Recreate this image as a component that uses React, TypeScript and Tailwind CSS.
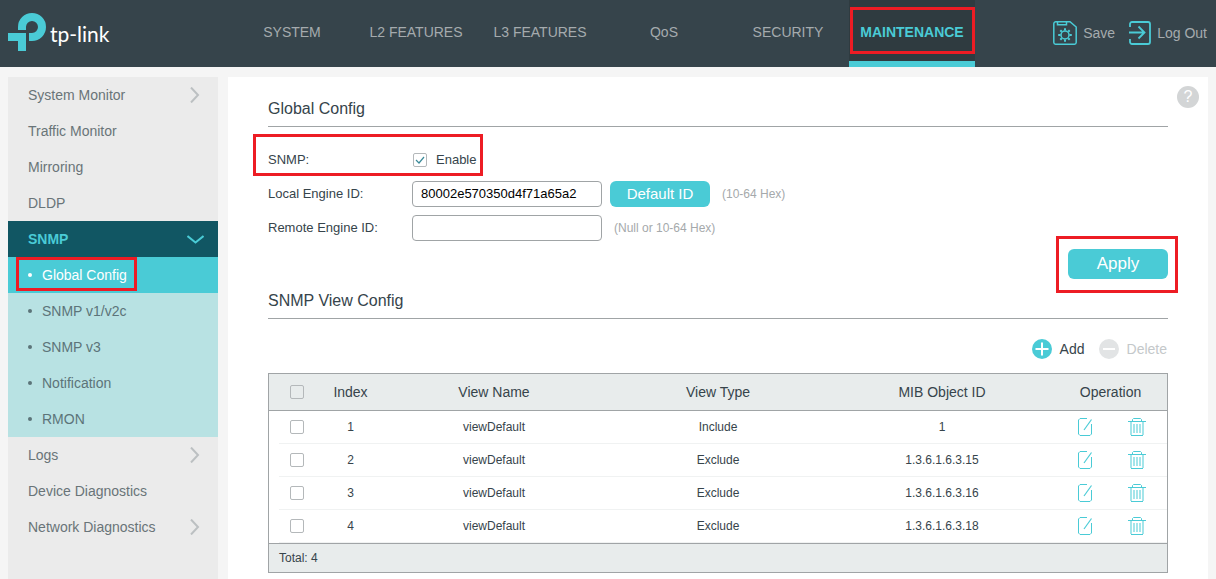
import { useState } from 'react';
import type { ReactNode } from 'react';
import clsx from 'clsx';

const TABS = [
    'SYSTEM',
    'L2 FEATURES',
    'L3 FEATURES',
    'QoS',
    'SECURITY',
    'MAINTENANCE',
];

type MenuItem = {
    title: string;
    expandable?: boolean;
    children?: string[];
};

const MENU: MenuItem[] = [
    { title: 'System Monitor', expandable: true },
    { title: 'Traffic Monitor' },
    { title: 'Mirroring' },
    { title: 'DLDP' },
    {
        title: 'SNMP',
        children: [
            'Global Config',
            'SNMP v1/v2c',
            'SNMP v3',
            'Notification',
            'RMON',
        ],
    },
    { title: 'Logs', expandable: true },
    { title: 'Device Diagnostics' },
    { title: 'Network Diagnostics', expandable: true },
];

type View = {
    index: number;
    name: string;
    type: 'Include' | 'Exclude';
    oid: string;
};

const VIEWS: View[] = [
    { index: 1, name: 'viewDefault', type: 'Include', oid: '1' },
    { index: 2, name: 'viewDefault', type: 'Exclude', oid: '1.3.6.1.6.3.15' },
    { index: 3, name: 'viewDefault', type: 'Exclude', oid: '1.3.6.1.6.3.16' },
    { index: 4, name: 'viewDefault', type: 'Exclude', oid: '1.3.6.1.6.3.18' },
];

function Highlight({ className }: { className: string }) {
    return (
        <span
            aria-hidden="true"
            className={clsx(
                'pointer-events-none absolute border-3 border-[#ed1c24]',
                className,
            )}
        />
    );
}

function Logo() {
    return (
        <a
            href="#home"
            className="flex w-[230px] shrink-0 items-center pb-[3px] pl-2"
        >
            <svg width="38" height="38" viewBox="8 13 38 38" fill="#4acbd6">
                <path d="M18 30V27A14 14 0 1 1 32 41H29V33H32A6 6 0 1 0 26 27V30Z" />
                <path d="M8 33H26V51H18V41H8Z" />
            </svg>
            <span className="pt-1 pl-1 font-['Lato',sans-serif] text-[21px] leading-6 text-white">
                tp-link
            </span>
        </a>
    );
}

function SaveIcon() {
    return (
        <svg
            width="24"
            height="24"
            viewBox="0 0 24 24"
            fill="none"
            stroke="#4acbd6"
            strokeWidth="1.5"
        >
            <path d="M3 .8H17L23.2 6V21.5A1.8 1.8 0 0 1 21.5 23.2H2.5A1.8 1.8 0 0 1 .8 21.5V2.8A2 2 0 0 1 3 .8Z" />
            <path d="M4.5 1V3.8H13.5V1" />
            <circle cx="12" cy="14" r="4" />
            <path
                d="M12 7.2V9.6M12 18.4V20.8M5.2 14H7.6M16.4 14H18.8M7.3 9.3L8.8 10.8M15.2 17.2L16.7 18.7M7.3 18.7L8.8 17.2M15.2 10.8L16.7 9.3"
                strokeWidth="2"
            />
        </svg>
    );
}

function LogoutIcon() {
    return (
        <svg
            width="22"
            height="24"
            viewBox="0 0 22 24"
            fill="none"
            stroke="#4acbd6"
            strokeWidth="1.8"
        >
            <path d="M1 6V3A2 2 0 0 1 3 1H19A2 2 0 0 1 21 3V21A2 2 0 0 1 19 23H3A2 2 0 0 1 1 21V18" />
            <path d="M0 11.5H15M9.5 5.5L15.5 11.5L9.5 17.5" />
        </svg>
    );
}

function EditIcon() {
    return (
        <svg
            width="14"
            height="18"
            viewBox="0 0 14 18"
            fill="none"
            stroke="#4acbd6"
        >
            <path d="M9 .5H2L.5 2V16L2 17.5H12L13.5 16V6" />
            <path d="M13.5 1.5L6 12" strokeWidth="1.2" />
        </svg>
    );
}

function TrashIcon() {
    return (
        <svg
            width="18"
            height="18"
            viewBox="0 0 18 18"
            fill="none"
            stroke="#4acbd6"
        >
            <path d="M0 3.5H18M4.5 3V1.5L5.5 .5H12.5L13.5 1.5V3M3 17.5H15" />
            <path
                d="M3 4V17M15 4V17M6 6V15M9 6V15M12 6V15"
                strokeWidth="2"
                opacity=".5"
            />
        </svg>
    );
}

function RoundSign({ plus }: { plus?: boolean }) {
    return (
        <svg width="20" height="20" viewBox="0 0 20 20">
            <circle cx="10" cy="10" r="10" fill={plus ? '#4acbd6' : '#e2e4e5'} />
            <path
                d={plus ? 'M3.5 10H16.5M10 3.5V16.5' : 'M4 10H16'}
                stroke="#fff"
                strokeWidth="2"
            />
        </svg>
    );
}

type CheckboxProps = {
    id?: string;
    label?: string;
    checked: boolean;
    onChange: () => void;
};

function Checkbox({ id, label, checked, onChange }: CheckboxProps) {
    return (
        <span className="grid size-[14px]">
            <input
                type="checkbox"
                id={id}
                aria-label={label}
                checked={checked}
                onChange={onChange}
                className="col-start-1 row-start-1 size-[14px] appearance-none rounded-xs border border-[#b4b8ba]"
            />
            {checked && (
                <svg
                    width="14"
                    height="14"
                    viewBox="0 0 14 14"
                    fill="none"
                    stroke="#3a8a99"
                    className="pointer-events-none col-start-1 row-start-1"
                >
                    <path d="M3 7L6 10L11 4" strokeWidth="1.2" />
                </svg>
            )}
        </span>
    );
}

function Header() {
    return (
        <header className="flex h-[67px] shrink-0 bg-[#36444b]">
            <Logo />
            <nav className="flex">
                {TABS.map((tab) => {
                    const active = tab === 'MAINTENANCE';
                    return (
                        <a
                            key={tab}
                            href={`#${tab.toLowerCase()}`}
                            className={clsx(
                                'relative flex items-center justify-center border-b-6 pt-[2px] text-sm whitespace-nowrap',
                                active
                                    ? '-ml-px w-[126px] border-[#4acbd6] bg-[#2f3b40] font-bold text-[#4acbd6]'
                                    : 'w-31 border-transparent text-[#a5abae]',
                            )}
                        >
                            {tab}
                            {active && (
                                <Highlight className="top-[7px] right-0 left-px h-[47px]" />
                            )}
                        </a>
                    );
                })}
            </nav>
            <div className="ml-auto flex items-center gap-[14px] pr-[9px] pb-[2px] text-sm text-[#a5abae]">
                <button type="button" className="flex items-center gap-[6px]">
                    <SaveIcon />
                    Save
                </button>
                <button type="button" className="flex items-center gap-[6px]">
                    <LogoutIcon />
                    Log Out
                </button>
            </div>
        </header>
    );
}

function Sidebar() {
    return (
        <nav className="w-[210px] shrink-0 bg-[#ebebeb] text-sm text-[#697478]">
            {MENU.map((item) => (
                <div key={item.title}>
                    <a
                        href="#menu"
                        className={clsx(
                            'flex h-9 items-center justify-between pl-5',
                            item.children
                                ? 'bg-[#115663] pr-[14px] font-bold text-[#4acbd6]'
                                : 'pr-[18px]',
                        )}
                    >
                        {item.title}
                        {item.expandable && (
                            <svg
                                width="10"
                                height="16"
                                viewBox="0 0 10 16"
                                fill="none"
                                stroke="#bcc0c2"
                                strokeWidth="2"
                            >
                                <path d="M1 .5L8 8L1 15.5" />
                            </svg>
                        )}
                        {item.children && (
                            <svg
                                width="17"
                                height="9"
                                viewBox="0 0 17 9"
                                fill="none"
                                stroke="#4acbd6"
                                strokeWidth="2"
                            >
                                <path d="M.5 1L8.5 7.5L16.5 1" />
                            </svg>
                        )}
                    </a>
                    {item.children?.map((child) => {
                        const active = child === 'Global Config';
                        return (
                            <a
                                key={child}
                                href="#submenu"
                                className={clsx(
                                    'relative flex h-9 items-center gap-[10px] pl-5',
                                    active
                                        ? 'bg-[#4acbd6] text-white'
                                        : 'bg-[#b8e2e3] text-[#5c7479]',
                                )}
                            >
                                <span className="size-1 rounded-full bg-current" />
                                {child}
                                {active && (
                                    <Highlight className="top-0 left-2 h-[34px] w-[121px]" />
                                )}
                            </a>
                        );
                    })}
                </div>
            ))}
        </nav>
    );
}

function SectionTitle({ children }: { children: ReactNode }) {
    return (
        <h2 className="border-b border-[#a0a4a6] pb-[5px] text-base leading-6">
            {children}
        </h2>
    );
}

function GlobalConfig() {
    const [enabled, setEnabled] = useState(true);
    const [localId, setLocalId] = useState('80002e570350d4f71a65a2');
    const [remoteId, setRemoteId] = useState('');

    return (
        <form className="pt-5" onSubmit={(e) => e.preventDefault()}>
            <SectionTitle>Global Config</SectionTitle>
            <div className="pt-4 text-[13px]">
                <div className="relative flex h-[34px] items-center">
                    <label htmlFor="snmp" className="w-36">
                        SNMP:
                    </label>
                    <span className="flex items-center gap-[9px] pl-px">
                        <Checkbox
                            id="snmp"
                            checked={enabled}
                            onChange={() => setEnabled(!enabled)}
                        />
                        <label htmlFor="snmp">Enable</label>
                    </span>
                    <Highlight className="-top-[9px] -left-[15px] h-[42px] w-[230px]" />
                </div>
                <div className="flex h-[34px] items-center">
                    <label htmlFor="local-id" className="w-36">
                        Local Engine ID:
                    </label>
                    <input
                        id="local-id"
                        type="text"
                        value={localId}
                        onChange={(e) => setLocalId(e.target.value)}
                        className="h-[26px] w-[190px] rounded border border-[#a0a4a6] px-2 pb-[2px] text-black"
                    />
                    <button
                        type="button"
                        className="ml-2 h-[26px] w-[100px] rounded-md bg-[#4acbd6] text-[15px] text-white"
                    >
                        Default ID
                    </button>
                    <span className="ml-3 text-xs text-[#a5a9ab]">
                        (10-64 Hex)
                    </span>
                </div>
                <div className="flex h-[34px] items-center">
                    <label htmlFor="remote-id" className="w-36">
                        Remote Engine ID:
                    </label>
                    <input
                        id="remote-id"
                        type="text"
                        value={remoteId}
                        onChange={(e) => setRemoteId(e.target.value)}
                        className="h-[26px] w-[190px] rounded border border-[#a0a4a6] px-2 pb-[2px] text-black"
                    />
                    <span className="ml-3 text-xs text-[#a5a9ab]">
                        (Null or 10-64 Hex)
                    </span>
                </div>
            </div>
            <div className="flex justify-end pt-1">
                <div className="relative">
                    <button
                        type="submit"
                        className="block h-[30px] w-[100px] rounded-md bg-[#4acbd6] text-[17px] text-white"
                    >
                        Apply
                    </button>
                    <Highlight className="-top-[13px] -right-[10px] -bottom-[14px] -left-3" />
                </div>
            </div>
        </form>
    );
}

function ViewConfig() {
    const [selected, setSelected] = useState<number[]>([]);

    const toggle = (index: number) => {
        setSelected((prev) =>
            prev.includes(index)
                ? prev.filter((i) => i !== index)
                : [...prev, index],
        );
    };

    const allSelected = selected.length === VIEWS.length;

    return (
        <section className="pt-[10px]">
            <SectionTitle>SNMP View Config</SectionTitle>
            <div className="flex justify-end gap-[14px] pt-5 pr-px text-sm leading-5">
                <button type="button" className="flex items-center gap-2">
                    <RoundSign plus />
                    Add
                </button>
                <button
                    type="button"
                    disabled={selected.length === 0}
                    className="flex items-center gap-2 disabled:text-[#c4c8ca]"
                >
                    <RoundSign />
                    Delete
                </button>
            </div>
            <div className="mt-[14px] border border-[#a0a4a6]">
                <table className="w-full table-fixed border-separate border-spacing-0 text-center">
                    <thead>
                        <tr className="h-[37px] bg-[#e8ecec] text-sm [&>th]:border-b [&>th]:border-[#a0a4a6] [&>th]:p-0 [&>th]:font-normal">
                            <th className="w-[50px]">
                                <div className="pl-[21px]">
                                    <Checkbox
                                        label="Select all"
                                        checked={allSelected}
                                        onChange={() =>
                                            setSelected(
                                                allSelected
                                                    ? []
                                                    : VIEWS.map((v) => v.index),
                                            )
                                        }
                                    />
                                </div>
                            </th>
                            <th className="w-[63px]">Index</th>
                            <th>View Name</th>
                            <th>View Type</th>
                            <th>MIB Object ID</th>
                            <th className="w-[113px]">Operation</th>
                        </tr>
                    </thead>
                    <tbody className="text-xs">
                        {VIEWS.map((view) => (
                            <tr
                                key={view.index}
                                className="h-[33px] [&>td]:p-0 [&>td:not(:first-child)]:border-b [&>td:not(:first-child)]:border-[#f0f2f2]"
                            >
                                <td>
                                    {/* the row line starts 10px in from the frame */}
                                    <div className="ml-[10px] flex h-[33px] items-center border-b border-[#f0f2f2] pl-[11px]">
                                        <Checkbox
                                            label={`Select ${view.index}`}
                                            checked={selected.includes(
                                                view.index,
                                            )}
                                            onChange={() => toggle(view.index)}
                                        />
                                    </div>
                                </td>
                                <td>{view.index}</td>
                                <td>{view.name}</td>
                                <td>{view.type}</td>
                                <td>{view.oid}</td>
                                <td>
                                    <div className="flex items-center justify-center gap-9 pl-[2px]">
                                        <button type="button" aria-label="Edit">
                                            <EditIcon />
                                        </button>
                                        <button
                                            type="button"
                                            aria-label="Delete view"
                                        >
                                            <TrashIcon />
                                        </button>
                                    </div>
                                </td>
                            </tr>
                        ))}
                    </tbody>
                    <tfoot>
                        <tr className="h-[29px] bg-[#e8ecec] text-xs">
                            <td
                                colSpan={6}
                                className="border-t border-[#a0a4a6] p-0 pl-[10px] text-left"
                            >
                                Total: {VIEWS.length}
                            </td>
                        </tr>
                    </tfoot>
                </table>
            </div>
        </section>
    );
}

export default function App() {
    return (
        <div className="flex min-h-screen flex-col bg-[#f5f5f5] font-['Liberation_Sans',Arial,sans-serif] text-[#36444b]">
            <Header />
            <div className="flex flex-1 gap-[10px] px-2 pt-[10px]">
                <Sidebar />
                <main className="relative min-w-0 flex-1 bg-white px-10 pb-[6px]">
                    <button
                        type="button"
                        aria-label="Help"
                        className="absolute top-[9px] right-[9px] size-[22px] rounded-full bg-[#d3d5d6] text-base leading-[22px] text-white"
                    >
                        ?
                    </button>
                    <GlobalConfig />
                    <ViewConfig />
                </main>
            </div>
        </div>
    );
}
